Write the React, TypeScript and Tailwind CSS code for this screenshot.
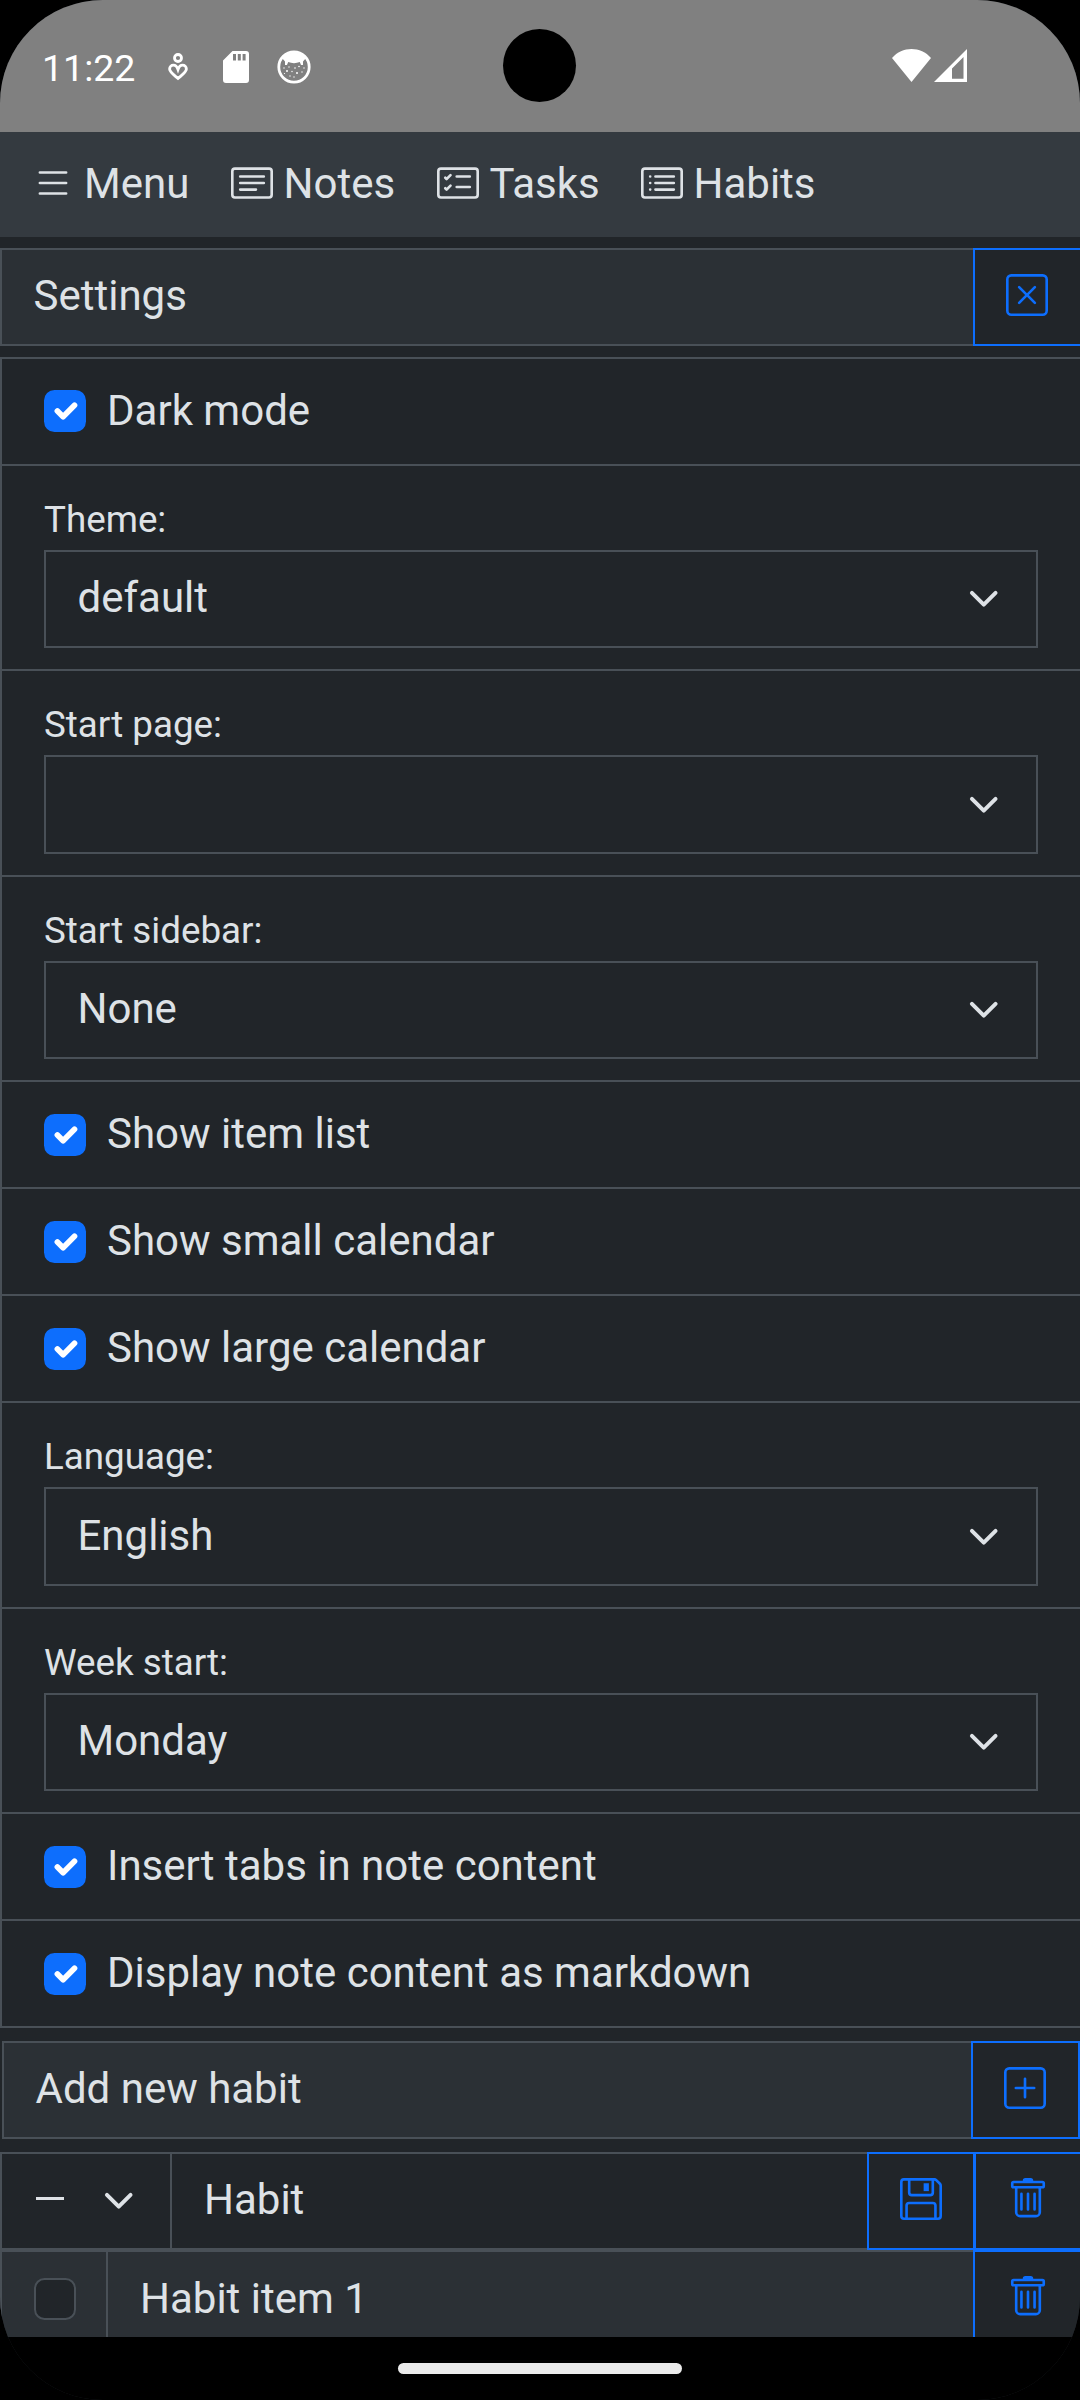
import type { ReactNode } from "react";
import {
  BsCardChecklist,
  BsCardList,
  BsCardText,
  BsFloppy,
  BsList,
  BsPlusSquare,
  BsTrash,
  BsXSquare,
} from "react-icons/bs";

function StatusBar() {
  return (
    <div className="relative flex h-[132px] shrink-0 items-start bg-[#808080] text-white">
      <span className="mt-[46px] ml-[42px] w-[126px] text-[37.5px] leading-[44px]">11:22</span>
      <svg className="mt-[53px] h-[28px] w-[20px]" viewBox="0 0 20 28" fill="none" stroke="white" strokeWidth="2.8">
        <circle cx="10" cy="5" r="3.500" />
        <path d="M10 25.500 C6 22 1.600 19 1.600 16 C1.600 13.600 3.400 12.200 5.400 12.200 C7.400 12.200 9 13.600 10 16.500 C11 13.600 12.600 12.200 14.600 12.200 C16.600 12.200 18.400 13.600 18.400 16 C18.400 19 14 22 10 25.500 Z" />
      </svg>
      <svg className="mt-[51px] ml-[35px] h-[32px] w-[26px]" viewBox="0 0 26 32">
        <path fill="white" fillRule="evenodd" d="M9.500 0H23a3 3 0 0 1 3 3v26a3 3 0 0 1-3 3H3a3 3 0 0 1-3-3V9.500ZM10 3v6.500h3V3ZM14.800 3v6.500h3V3ZM19.600 3v6.500h3V3Z" />
      </svg>
      <svg className="mt-[50px] ml-[28px] h-[34px] w-[34px]" viewBox="0 0 34 34">
        <circle cx="17" cy="17" r="15.200" fill="none" stroke="white" strokeWidth="2.800" />
        <path fill="white" d="M5 8C11 1 23 1 29 8L26 11.500V15H24L22.800 12C19 13.500 15 13.500 11.200 12L10 15H8V11.500Z" />
        <g fill="white">
          <circle cx="7" cy="18" r=".7" /><circle cx="12" cy="17" r=".7" /><circle cx="18" cy="18" r=".8" />
          <circle cx="22" cy="16.500" r=".8" /><circle cx="27" cy="18" r=".7" /><circle cx="10" cy="21" r="1" />
          <circle cx="15" cy="21.500" r=".7" /><circle cx="20" cy="23" r="1" /><circle cx="25" cy="22" r=".7" />
          <circle cx="13" cy="26" r=".7" /><circle cx="17" cy="27" r=".7" /><circle cx="7.500" cy="23.500" r=".6" />
        </g>
      </svg>
      <div className="absolute top-[29px] left-[503px] h-[73px] w-[73px] rounded-full bg-black" />
      <svg className="mt-[49px] ml-auto h-[33px] w-[39px]" viewBox="0 0 39 33">
        <path fill="white" d="M0 9C10-3 29-3 39 9L19.500 33Z" />
      </svg>
      <svg className="mt-[49px] mr-[113px] ml-[3px] h-[33px] w-[33px]" viewBox="0 0 33 33">
        <path fill="white" fillRule="evenodd" d="M33 0V33H0ZM29.500 8L18 19.500V29.700H29.500Z" />
      </svg>
    </div>
  );
}

function NavItem({ icon, label, className }: { icon: ReactNode; label: string; className: string }) {
  return (
    <a className={`flex items-center gap-[10.5px] text-[42px] leading-[63px] ${className}`}>
      {icon}
      <span className="relative top-px">{label}</span>
    </a>
  );
}

function Chevron({ className }: { className: string }) {
  return (
    <svg className={className} viewBox="0 0 16 16" fill="none" stroke="currentColor" strokeWidth="2" strokeLinecap="round" strokeLinejoin="round">
      <path d="m2 5 6 6 6-6" />
    </svg>
  );
}

function CheckRow({ label, first }: { label: string; first?: boolean }) {
  return (
    <div className="flex h-[107px] items-start border-b-2 border-[#495057] pl-[42px]">
      <span className={`flex h-[42px] w-[42px] items-center justify-center rounded-[10.5px] bg-[#0d6efd] ${first ? "mt-[31px]" : "mt-[32px]"}`}>
        <svg className="h-[38px] w-[38px]" viewBox="0 0 20 20" fill="none" stroke="white" strokeWidth="3" strokeLinecap="round" strokeLinejoin="round">
          <path d="m6 10 3 3 6-6" />
        </svg>
      </span>
      <span className="mt-[20px] ml-[21px] text-[42px] leading-[63px]">{label}</span>
    </div>
  );
}

function SelectRow({ label, value, tall }: { label: string; value?: string; tall?: boolean }) {
  return (
    <div className={`border-b-2 border-[#495057] px-[42px] ${tall ? "h-[206px]" : "h-[205px]"}`}>
      <div className="h-[84px] pt-[26px] text-[36.75px] leading-[55px]">{label}</div>
      <div className={`flex items-center justify-between border-2 border-[#495057] pr-[36.75px] pl-[31.5px] ${tall ? "h-[99px]" : "h-[98px]"}`}>
        <span className="relative -top-[1.5px] text-[42px] leading-[63px]">{value}</span>
        <Chevron className="h-[31.5px] w-[31.5px]" />
      </div>
    </div>
  );
}

function IconButton({ children, className }: { children: ReactNode; className: string }) {
  return (
    <button className={`flex shrink-0 items-center justify-center border-2 border-[#0d6efd] bg-[#212529] text-[#0d6efd] ${className}`}>
      {children}
    </button>
  );
}

export default function App() {
  return (
    <div className="h-[2400px] w-[1080px] bg-black">
      <div className="flex h-[2400px] w-[1080px] flex-col overflow-hidden rounded-[103px] bg-[#212529] font-['Roboto',sans-serif] text-[#dee2e6]">
        <StatusBar />

        <nav className="flex h-[105px] shrink-0 items-center bg-[#343a40] pb-[4px] pl-[31.5px]">
          <NavItem className="w-[199.5px]" label="Menu" icon={<BsList className="h-[42px] w-[42px] shrink-0" />} />
          <NavItem className="w-[206px]" label="Notes" icon={<BsCardText className="h-[42px] w-[42px] shrink-0" />} />
          <NavItem className="w-[204px]" label="Tasks" icon={<BsCardChecklist className="h-[42px] w-[42px] shrink-0" />} />
          <NavItem className="w-[200px]" label="Habits" icon={<BsCardList className="h-[42px] w-[42px] shrink-0" />} />
        </nav>

        <header className="mt-[11px] flex h-[98px] shrink-0">
          <div className="flex w-[973px] items-center border-y-2 border-l-2 border-[#495057] bg-[#2b3035] pl-[31.5px]">
            <h1 className="relative -top-[1.5px] text-[42px] leading-[63px]">Settings</h1>
          </div>
          <IconButton className="w-[107px] border-r-0 pr-px pb-1">
            <BsXSquare className="h-[42px] w-[42px]" />
          </IconButton>
        </header>

        <section className="mt-[11px] shrink-0 border-t-2 border-l-2 border-[#495057]">
          <CheckRow label="Dark mode" first />
          <SelectRow label="Theme:" value="default" />
          <SelectRow label="Start page:" tall />
          <SelectRow label="Start sidebar:" value="None" />
          <CheckRow label="Show item list" />
          <CheckRow label="Show small calendar" />
          <CheckRow label="Show large calendar" />
          <SelectRow label="Language:" value="English" tall />
          <SelectRow label="Week start:" value="Monday" />
          <CheckRow label="Insert tabs in note content" />
          <CheckRow label="Display note content as markdown" />
        </section>

        <div className="mt-[13px] flex h-[98px] shrink-0 pl-[2px]">
          <div className="flex w-[969px] items-center border-y-2 border-l-2 border-[#495057] bg-[#2b3035] pl-[31.5px]">
            <span className="relative -top-[1.5px] text-[42px] leading-[63px]">Add new habit</span>
          </div>
          <IconButton className="w-[109px] pr-px pb-1">
            <BsPlusSquare className="h-[42px] w-[42px]" />
          </IconButton>
        </div>

        <div className="mt-[13px] flex h-[98px] shrink-0">
          <div className="flex w-[867px] items-center border-y-2 border-l-2 border-[#495057]">
            <div className="flex h-full w-[170px] items-center border-r-2 border-[#495057] pl-[34px]">
              <span className="mb-[5px] h-[3px] w-[28px] bg-[#dee2e6]" />
              <Chevron className="ml-[39.25px] h-[31.5px] w-[31.5px]" />
            </div>
            <span className="relative -top-[1.5px] ml-[32px] text-[42px] leading-[63px]">Habit</span>
          </div>
          <IconButton className="w-[106px] border-r-0 pb-1">
            <BsFloppy className="h-[42px] w-[42px]" />
          </IconButton>
          <IconButton className="w-[107px] border-r-0 border-l-3 pr-px pb-1">
            <BsTrash className="h-[42px] w-[42px]" />
          </IconButton>
        </div>

        <div className="flex h-[87px] shrink-0 overflow-hidden">
          <div className="flex h-[98px] w-[973px] items-center border-y-2 border-l-2 border-[#495057] bg-[#2b3035]">
            <div className="flex h-full w-[106px] items-center border-r-2 border-[#495057] pl-[32px]">
              <span className="h-[42px] w-[42px] rounded-[10.5px] border-2 border-[#495057] bg-[#212529]" />
            </div>
            <span className="relative -top-[0.5px] ml-[32px] text-[42px] leading-[63px]">Habit item 1</span>
          </div>
          <IconButton className="h-[98px] w-[107px] border-r-0 pb-1">
            <BsTrash className="h-[42px] w-[42px]" />
          </IconButton>
        </div>

        <footer className="flex h-[63px] shrink-0 items-start justify-center bg-black pt-[26px]">
          <span className="h-[10.5px] w-[284px] rounded-full bg-[#ebebeb]" />
        </footer>
      </div>
    </div>
  );
}
